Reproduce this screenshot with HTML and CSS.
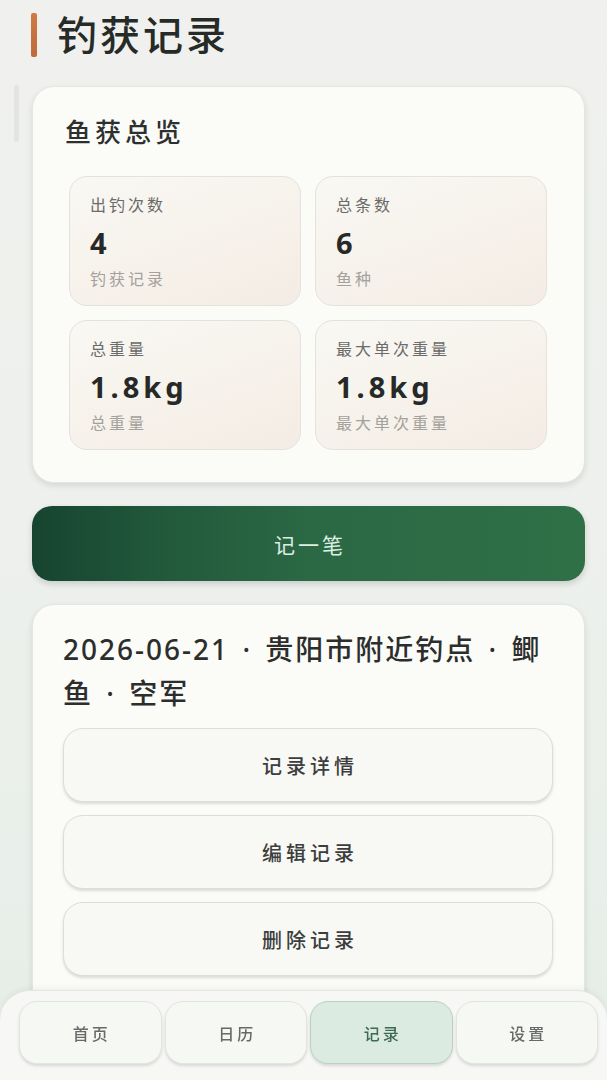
FILE: index.html
```html
<!DOCTYPE html>
<html lang="zh-CN">
<head>
    <meta charset="UTF-8">
    <meta name="viewport" content="width=device-width, initial-scale=1.0">
    <title>钓获记录</title>
    <link rel="stylesheet" href="styles.css">
</head>
<body>

    <main class="page">
        <!-- Page title -->
        <header class="page-head">
            <span class="head-mark"></span>
            <h1>钓获记录</h1>
        </header>

        <!-- Overview -->
        <div class="overview-row">
            <span class="edge-mark"></span>
            <section class="card overview">
                <h2>鱼获总览</h2>
                <div class="stats">
                    <div class="stat">
                        <div class="stat-label">出钓次数</div>
                        <div class="stat-value">4</div>
                        <div class="stat-sub">钓获记录</div>
                    </div>
                    <div class="stat">
                        <div class="stat-label">总条数</div>
                        <div class="stat-value">6</div>
                        <div class="stat-sub">鱼种</div>
                    </div>
                    <div class="stat">
                        <div class="stat-label">总重量</div>
                        <div class="stat-value">1.8kg</div>
                        <div class="stat-sub">总重量</div>
                    </div>
                    <div class="stat">
                        <div class="stat-label">最大单次重量</div>
                        <div class="stat-value">1.8kg</div>
                        <div class="stat-sub">最大单次重量</div>
                    </div>
                </div>
            </section>
        </div>

        <button class="add-btn">记一笔</button>

        <!-- Record item -->
        <section class="card record">
            <p class="record-title">2026-06-21 · 贵阳市附近钓点 · 鲫鱼 · 空军</p>
            <div class="record-actions">
                <button class="action-btn">记录详情</button>
                <button class="action-btn">编辑记录</button>
                <button class="action-btn">删除记录</button>
            </div>
        </section>
    </main>

    <!-- Bottom tabs -->
    <nav class="tabbar">
        <a href="#" class="tab">首页</a>
        <a href="#" class="tab">日历</a>
        <a href="#" class="tab active">记录</a>
        <a href="#" class="tab">设置</a>
    </nav>

</body>
</html>
```

FILE: styles.css
```css
/* Reset */
* {
    margin: 0;
    padding: 0;
    box-sizing: border-box;
    font-family: "Noto Sans", "Noto Sans CJK SC", sans-serif;
}

body {
    background: linear-gradient(180deg, #f0f1ee 0%, #edf0ec 50%, #e6eee8 100%);
    color: #2b2e2c;
    height: 1080px;
    overflow: hidden;
}

.page {
    padding: 13px 22px 0 32px;
}

/* Title */
.page-head {
    display: flex;
    align-items: center;
    gap: 20px;
    margin-left: -1px;
}

.head-mark {
    width: 6px;
    height: 44px;
    border-radius: 2px;
    background: linear-gradient(180deg, #d07a45, #c0693a);
}

.page-head h1 {
    font-size: 40px;
    line-height: 44px;
    font-weight: 500;
    letter-spacing: 3px;
    color: #272b28;
}

/* Cards */
.overview-row {
    display: flex;
    align-items: flex-start;
    gap: 13px;
    margin: 29px 0 0 -18px;
}

.edge-mark {
    width: 5px;
    height: 57px;
    margin-top: -1px;
    border-radius: 2px;
    background: #e3e5e2;
}

.card {
    flex: 1;
    background: #fbfbf8;
    border: 1px solid #e4e6e2;
    border-radius: 22px;
    box-shadow: 0 3px 6px rgba(0, 0, 0, 0.1);
}

.overview {
    padding: 27px 32px 32px;
}

.overview h2 {
    font-size: 26px;
    line-height: 36px;
    font-weight: 500;
    letter-spacing: 4px;
    color: #2d302e;
    margin-bottom: 26px;
}

.stats {
    display: grid;
    grid-template-columns: 1fr 1fr;
    gap: 14px;
    margin: 0 5px 0 4px;
}

.stat {
    height: 130px;
    padding: 16px 20px;
    border: 1px solid #e5e1db;
    border-radius: 18px;
    background: linear-gradient(160deg, #f9f8f4 0%, #f6f1ea 60%, #f4ece4 100%);
}

.stat-label {
    font-size: 16px;
    line-height: 24px;
    letter-spacing: 3px;
    color: #6a6b69;
}

.stat-value {
    margin-top: 6px;
    font-size: 29px;
    line-height: 40px;
    font-weight: 700;
    letter-spacing: 4px;
    color: #262927;
}

.stat-sub {
    margin-top: 4px;
    font-size: 16px;
    line-height: 24px;
    letter-spacing: 3px;
    color: #a4a19c;
}

/* Main button */
.add-btn {
    display: block;
    width: 100%;
    height: 75px;
    margin-top: 23px;
    border: none;
    border-radius: 20px;
    background: linear-gradient(90deg, #174430 0%, #225a3c 25%, #2b6844 50%, #2f7047 100%);
    box-shadow: 0 3px 6px rgba(0, 0, 0, 0.15);
    color: #dcefe2;
    font-size: 21px;
    letter-spacing: 3px;
    text-indent: 3px;
}

/* Record card */
.record {
    margin-top: 23px;
    padding: 22px 31px 40px 30px;
}

.record-title {
    font-size: 28px;
    line-height: 44px;
    font-weight: 500;
    letter-spacing: 2px;
    word-spacing: 4px;
    color: #2b2e2c;
}

.record-actions {
    display: flex;
    flex-direction: column;
    gap: 13px;
    margin-top: 13px;
}

.action-btn {
    height: 74px;
    border: 1px solid #deded9;
    border-radius: 20px;
    background: #f8f8f5;
    box-shadow: 0 2px 3px rgba(0, 0, 0, 0.13);
    color: #3c3e3d;
    font-size: 20px;
    font-weight: 500;
    letter-spacing: 4px;
    text-indent: 4px;
}

/* Bottom tabs */
.tabbar {
    position: fixed;
    left: 0;
    right: 0;
    bottom: 0;
    height: 90px;
    display: flex;
    gap: 3px;
    padding: 10px 9px 0 19px;
    background: #f7f8f5;
    border-top: 1px solid #e3e6e2;
    border-radius: 30px 30px 0 0;
    box-shadow: 0 -2px 6px rgba(0, 0, 0, 0.05);
}

.tab {
    flex: 1;
    height: 63px;
    display: flex;
    align-items: center;
    justify-content: center;
    border: 1px solid #e3e5e1;
    border-radius: 18px;
    background: #f6f8f4;
    box-shadow: 0 2px 3px rgba(0, 0, 0, 0.12);
    color: #676a68;
    font-size: 16px;
    font-weight: 500;
    letter-spacing: 3px;
    text-indent: 3px;
    text-decoration: none;
}

.tab.active {
    background: #dcebe2;
    border-color: #b9d1c3;
    color: #3d6a51;
}
```
